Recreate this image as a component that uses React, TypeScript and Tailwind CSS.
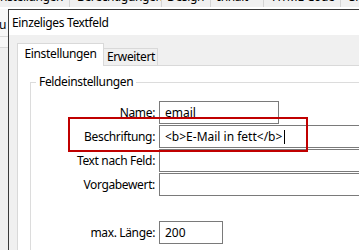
export default function App() {
  const font = { fontFamily: '"Noto Sans", "Liberation Sans", sans-serif' }

  return (
    <div className="relative w-[359px] h-[250px] overflow-hidden bg-[#f0f0f0] text-[12px] tracking-[-0.35px] text-black" style={font}>
      {/* background window: its tab bar, mostly hidden */}
      <div className="flex h-[9px] overflow-hidden border-b-2 border-white bg-[#f0f0f0] leading-[12px]">
        <div className="w-[70px] shrink-0 overflow-hidden whitespace-nowrap border-r border-[#d4d4d4]">
          <div className="-ml-[9px] -mt-[9px]">Einstellungen</div>
        </div>
        <div className="w-[92px] shrink-0 overflow-hidden whitespace-nowrap border-r border-[#d4d4d4] pl-[7px]">
          <div className="-mt-[9px]">Berechtigungen</div>
        </div>
        <div className="w-[49px] shrink-0 overflow-hidden whitespace-nowrap border-r border-[#d4d4d4] pl-[5px]">
          <div className="-mt-[9px]">Design</div>
        </div>
        <div className="w-[53px] shrink-0 overflow-hidden whitespace-nowrap border-r border-[#d4d4d4] pl-[6px]">
          <div className="-mt-[9px]">Inhalt</div>
        </div>
        <div className="w-[77px] shrink-0 overflow-hidden whitespace-nowrap border-r border-[#d4d4d4] pl-[8px]">
          <div className="-mt-[9px]">HTML-Code</div>
        </div>
        <div className="shrink-0 overflow-hidden whitespace-nowrap pl-[8px]">
          <div className="-mt-[9px]">Sicherheit</div>
        </div>
      </div>

      <div className="flex h-[241px]">
        {/* background window: left edge */}
        <div className="w-[8px] shrink-0 overflow-hidden bg-[#f7f7f7]">
          <div className="h-[28px] border-b border-[#d9d9d9] pt-[8px] leading-[16px] -ml-[1px]">u</div>
          <div className="h-[11px] border-b border-[#d9d9d9]" />
          <div className="h-full bg-[#f0f0f0]" />
        </div>

        {/* dialog */}
        <div className="flex min-w-0 flex-1 flex-col border-l border-t border-[#3a3a3a]">
          <div className="h-[25px] shrink-0 bg-white pl-[3px] leading-[25px]">Einzeliges Textfeld</div>

          <div className="flex min-h-0 flex-1 flex-col bg-[#f0f0f0] pl-[8px] pt-[8px]">
            <div className="flex h-[22px] shrink-0 items-end">
              <div className="relative z-10 -mb-px flex h-[23px] w-[87px] items-center justify-center border border-b-0 border-[#d9d9d9] bg-white pb-[2px]">
                Einstellungen
              </div>
              <div className="flex h-[17px] w-[54px] items-center justify-center border-r border-t border-[#d9d9d9] bg-[#f0f0f0] pl-[1px]">
                Erweitert
              </div>
            </div>

            <div className="flex-1 overflow-hidden border-l border-t border-[#d9d9d9] bg-white">
              <fieldset className="ml-[12px] mt-[8px] w-[380px] border border-[#dcdcdc] pb-[20px] pl-[5px] pt-[11px]">
                <legend className="px-[3px] leading-[16px]">Feldeinstellungen</legend>
                <div className="-ml-[6px] grid grid-cols-[125px_1fr] gap-x-[4px] gap-y-px">
                  <Label text="Name:" />
                  <Field className="w-[120px]" value="email" />

                  <Label text="Beschriftung:" />
                  <Field className="w-[260px] border-[#4f86be]" value="<b>E-Mail in fett</b>" caret />

                  <Label text="Text nach Feld:" />
                  <Field className="w-[260px]" value="" />

                  <Label text="Vorgabewert:" />
                  <Field className="w-[260px]" value="" />

                  <div className="col-span-2 h-[23px]" />

                  <Label text="max. Länge:" />
                  <Field className="w-[64px]" value="200" />
                </div>
              </fieldset>
            </div>
          </div>
        </div>
      </div>

      {/* red annotation frame */}
      <div className="absolute left-[68px] top-[117px] h-[35px] w-[240px] border-2 border-[#c00000]" />
    </div>
  )
}

function Label({ text }: { text: string }) {
  return <div className="flex h-[23px] items-center justify-end whitespace-nowrap">{text}</div>
}

function Field({ value, className, caret }: { value: string; className?: string; caret?: boolean }) {
  return (
    <div className={`flex h-[23px] items-center whitespace-nowrap border border-[#7a7a7a] bg-white px-[5px] tracking-normal ${className ?? ''}`}>
      <span>{value}</span>
      {caret && <span className="ml-[2px] inline-block h-[14px] w-px bg-black" />}
    </div>
  )
}
